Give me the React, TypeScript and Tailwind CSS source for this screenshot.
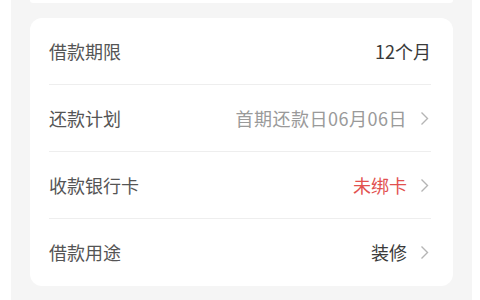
const rows = [
  { label: "借款期限", value: "12个月", tone: "dark", arrow: false },
  { label: "还款计划", value: "首期还款日06月06日", tone: "muted", arrow: true },
  { label: "收款银行卡", value: "未绑卡", tone: "red", arrow: true },
  { label: "借款用途", value: "装修", tone: "dark", arrow: true },
];

const toneClass: Record<string, string> = {
  dark: "text-[#3a3a3a]",
  muted: "text-[#9a9a9a] tracking-[0.5px]",
  red: "text-[#e2514f]",
};

const Chevron = () => (
  <svg width="11" height="15" viewBox="0 0 11 15" className="ml-[13px]">
    <path d="M1.5 1.5 L7.5 7.5 L1.5 13.5" fill="none" stroke="#b5b5b5" strokeWidth="1.4" />
  </svg>
);

export default function App() {
  return (
    <div
      className="w-[480px] h-[300px] bg-white overflow-hidden"
      style={{ fontFamily: '"Noto Sans CJK SC", "Noto Sans", sans-serif' }}
    >
      <div className="ml-[11px] w-[461px] h-full bg-[#f5f5f5] px-[19px]">
        {/* bottom of previous card */}
        <div className="h-[3px] bg-white rounded-b-[10px]" />
        <div className="mt-[15px] bg-white rounded-[12px] px-[19px] pr-[22px]">
          {rows.map((row, i) => (
            <div
              key={row.label}
              className={
                "h-[67px] flex items-center justify-between " +
                (i < rows.length - 1 ? "border-b border-[#eeeeee]" : "")
              }
            >
              <span className="text-[18px] text-[#555555]">{row.label}</span>
              <div className="flex items-center">
                <span className={"text-[18px] " + toneClass[row.tone]}>{row.value}</span>
                {row.arrow && <Chevron />}
              </div>
            </div>
          ))}
        </div>
      </div>
    </div>
  );
}
